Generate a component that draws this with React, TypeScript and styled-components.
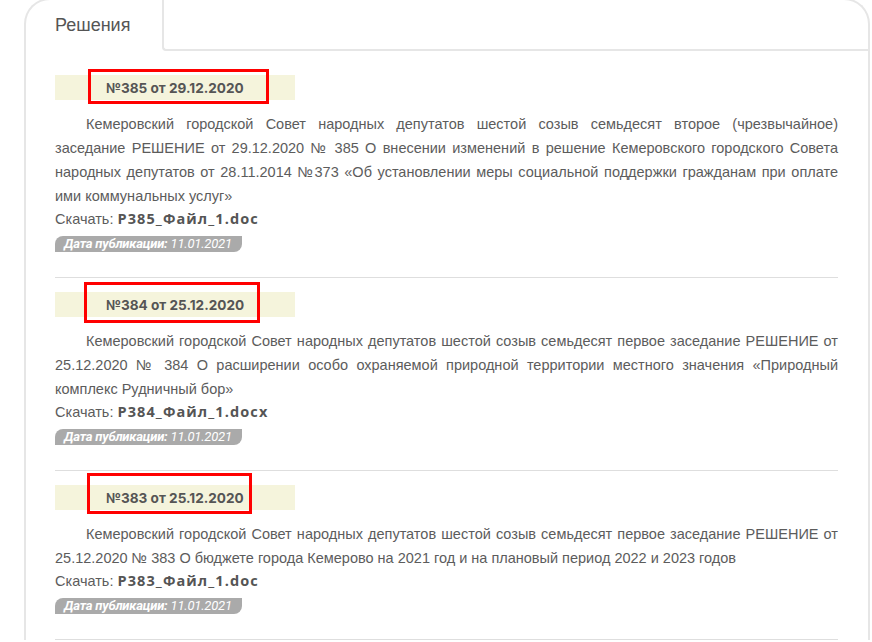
import React from 'react';
import styled, { createGlobalStyle } from 'styled-components';

// type
interface Decision {
  id: number;
  title: string;
  text: string;
  file: string;
  published: string;
  mark: { left: number; top: number; width: number; height: number };
}

const decisions: Decision[] = [
  {
    id: 385,
    title: '№385 от 29.12.2020',
    text:
      'Кемеровский городской Совет народных депутатов шестой созыв семьдесят второе (чрезвычайное) заседание РЕШЕНИЕ от 29.12.2020 №  385 О внесении изменений в решение Кемеровского городского Совета народных депутатов от 28.11.2014 №373 «Об установлении меры социальной поддержки гражданам при оплате ими коммунальных услуг»',
    file: 'Р385_Файл_1.doc',
    published: '11.01.2021',
    mark: { left: 33, top: -6, width: 181, height: 35 },
  },
  {
    id: 384,
    title: '№384 от 25.12.2020',
    text:
      'Кемеровский городской Совет народных депутатов шестой созыв семьдесят первое заседание РЕШЕНИЕ от 25.12.2020 №  384 О расширении особо охраняемой природной территории местного значения «Природный комплекс Рудничный бор»',
    file: 'Р384_Файл_1.docx',
    published: '11.01.2021',
    mark: { left: 29, top: -10, width: 176, height: 41 },
  },
  {
    id: 383,
    title: '№383 от 25.12.2020',
    text:
      'Кемеровский городской Совет народных депутатов шестой созыв семьдесят первое заседание РЕШЕНИЕ от 25.12.2020 № 383 О бюджете города Кемерово на 2021 год и на плановый период 2022 и 2023 годов',
    file: 'Р383_Файл_1.doc',
    published: '11.01.2021',
    mark: { left: 32, top: -12, width: 165, height: 41 },
  },
];

const GlobalStyle = createGlobalStyle`
  html, body {
    margin: 0;
    padding: 0;
    background: #fff;
    overflow: hidden;
  }
  body {
    font-family: 'Liberation Sans', Arial, sans-serif;
  }
`;

const Page = styled.div`
  padding-left: 24px;
  width: 872px;
  height: 642px;
  box-sizing: border-box;
  overflow: hidden;
`;

const Card = styled.div`
  width: 846px;
  margin-top: -2px;
  box-sizing: border-box;
  border: 2px solid #e6e6e6;
  border-bottom: none;
  border-radius: 26px 26px 0 0;
  background: #fff;
`;

const TabBar = styled.div`
  display: flex;
  height: 51px;
`;

const ActiveTab = styled.div`
  width: 136px;
  padding-left: 29px;
  box-sizing: border-box;
  display: flex;
  align-items: center;
  font-size: 18px;
  color: #555;
`;

const TabRest = styled.div`
  flex: 1;
  border-left: 2px solid #e6e6e6;
  border-bottom: 2px solid #e6e6e6;
  border-bottom-left-radius: 4px;
`;

const Content = styled.div`
  padding: 24px 30px 0 29px;
`;

const Item = styled.div`
  padding: 0 0 25px;
  border-bottom: 1px solid #dedede;
  margin-bottom: 14px;
`;

const Band = styled.div`
  position: relative;
  width: 240px;
  height: 25px;
  background: #f5f4dc;
  display: flex;
  align-items: center;
  padding-left: 51px;
  box-sizing: border-box;
`;

const Title = styled.h3`
  margin: 0;
  font-family: Inter, 'Open Sans', sans-serif;
  font-weight: 700;
  font-size: 13.6px;
  color: #555;
`;

const Mark = styled.span`
  position: absolute;
  border: 3px solid #f00;
  box-sizing: border-box;
  pointer-events: none;
`;

const Body = styled.p`
  margin: 12px 0 0;
  font-size: 14.5px;
  line-height: 24px;
  color: #5c5c5c;
  text-align: justify;
  text-indent: 31px;
`;

const Download = styled.div`
  font-size: 14.5px;
  line-height: 22px;
  color: #5c5c5c;

  b {
    font-family: 'Open Sans', Inter, sans-serif;
    font-weight: 700;
    font-size: 14.5px;
    letter-spacing: 1.1px;
    color: #555;
  }
`;

const Published = styled.div`
  width: fit-content;
  margin-top: 6px;
  height: 16px;
  line-height: 16px;
  padding: 0 10px 0 9px;
  background: #aaa;
  border-radius: 8px 0 8px 0;
  color: #fff;
  font-family: Roboto, 'Liberation Sans', sans-serif;
  font-style: italic;
  font-size: 13px;
  letter-spacing: -0.2px;

  b {
    font-weight: 700;
  }
`;

const App: React.FC = () => {
  return (
    <Page>
      <GlobalStyle />
      <Card>
        <TabBar>
          <ActiveTab>Решения</ActiveTab>
          <TabRest />
        </TabBar>
        <Content>
          {decisions.map(d => (
            <Item key={d.id}>
              <Band>
                <Title>{d.title}</Title>
                <Mark
                  style={{
                    left: d.mark.left,
                    top: d.mark.top,
                    width: d.mark.width,
                    height: d.mark.height,
                  }}
                />
              </Band>
              <Body>{d.text}</Body>
              <Download>
                Скачать: <b>{d.file}</b>
              </Download>
              <Published>
                <b>Дата публикации:</b> {d.published}
              </Published>
            </Item>
          ))}
        </Content>
      </Card>
    </Page>
  );
};

export default App;
